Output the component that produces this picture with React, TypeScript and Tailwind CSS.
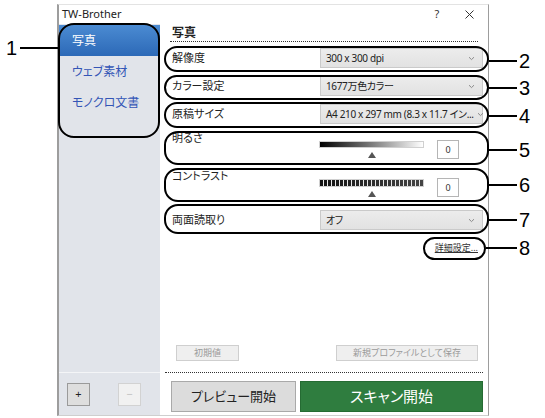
import React from "react";

type Callout = {
  n: string;
  top: number;
  h: number;
  y: number;
};

const callouts: Callout[] = [
  { n: "2", top: 46, h: 26, y: 60 },
  { n: "3", top: 75, h: 25, y: 87 },
  { n: "4", top: 102, h: 26, y: 115 },
  { n: "5", top: 131, h: 34, y: 149 },
  { n: "6", top: 168, h: 34, y: 184 },
  { n: "7", top: 204, h: 30, y: 219 },
];

function Chevron() {
  return (
    <svg width="7" height="5" viewBox="0 0 7 5" className="shrink-0">
      <path d="M1 1.2 L3.5 3.6 L6 1.2" fill="none" stroke="#8a8a8a" strokeWidth="1" />
    </svg>
  );
}

function SelectRow({ label, value }: { label: string; value: string }) {
  return (
    <div className="flex h-[20px] items-center justify-between pl-[12px] pr-[5px]">
      <span className="text-[11px] text-[#222]">{label}</span>
      <div className="flex h-[20px] w-[163px] items-center justify-between gap-[3px] border border-[#cacaca] bg-[linear-gradient(#ececec,#e2e2e2)] pl-[5px] pr-[7px]">
        <span className="whitespace-nowrap text-[10px] tracking-[-0.35px] text-[#222]">{value}</span>
        <Chevron />
      </div>
    </div>
  );
}

function SliderRow({ label, contrast }: { label: string; contrast?: boolean }) {
  return (
    <div className="flex h-[34px] items-start pl-[12px] pr-[5px]">
      <span className="w-[147px] text-[11px] leading-[14px] text-[#222]">{label}</span>
      <div className="mt-[10px] flex w-[105px] flex-col items-center">
        {contrast ? (
          <div className="flex h-[8px] w-full gap-[1px] border border-[#d0d0d0] bg-[#e8e8e8]">
            {Array.from({ length: 26 }).map((_, i) => (
              <span
                key={i}
                className="h-full w-[3px]"
                style={{ backgroundColor: `rgb(${18 + i * 2}, ${18 + i * 2}, ${18 + i * 2})` }}
              />
            ))}
          </div>
        ) : (
          <div className="h-[7px] w-full border border-[#d0d0d0] bg-[linear-gradient(90deg,#000,#6e6e6e_45%,#fff)]" />
        )}
        <div className="mt-[4px] h-0 w-0 border-x-[4px] border-b-[6px] border-x-transparent border-b-[#555]" />
      </div>
      <div className="ml-[13px] mt-[9px] flex h-[19px] w-[22px] items-center justify-center border border-[#b5b5b5] bg-white text-[9px] text-[#333]">
        0
      </div>
    </div>
  );
}

export default function App() {
  return (
    <div className="relative h-[418px] w-[545px] overflow-hidden bg-white [font-family:'Noto_Sans','Noto_Sans_CJK_JP',sans-serif] [font-feature-settings:'palt']">
      <div className="ml-[57px] mt-[4px] flex h-[412px] w-[432px] flex-col border-b border-l-2 border-r border-t border-b-[#cfcfcf] border-l-[#9d9d9d] border-r-[#9d9d9d] border-t-[#e3e3e3]">
        {/* title bar */}
        <div className="flex h-[19px] items-center pl-[3px] pr-[9px]">
          <span className="flex-1 text-[11px] text-[#222]">TW-Brother</span>
          <span className="w-[20px] text-center text-[11px] text-[#333]">?</span>
          <span className="ml-[12px] flex w-[20px] justify-center">
            <svg width="9" height="9" viewBox="0 0 9 9">
              <path d="M0.5 0.5 L8.5 8.5 M8.5 0.5 L0.5 8.5" stroke="#333" strokeWidth="1" />
            </svg>
          </span>
        </div>

        <div className="flex flex-1">
          {/* sidebar */}
          <div className="flex w-[101px] flex-col bg-[#e1e4ea] pt-[1px]">
            <div className="flex h-[31px] items-center bg-[linear-gradient(#4b8bd2,#2c69b7)] pl-[13px] text-[12px] text-white">
              写真
            </div>
            <div className="flex h-[31px] items-center pl-[13px] text-[12px] text-[#3355b6]">ウェブ素材</div>
            <div className="flex h-[31px] items-center pl-[13px] text-[12px] text-[#3355b6]">モノクロ文書</div>
            <div className="mt-auto flex h-[43px] items-start gap-[28px] border-t border-[#f4f5f7] pl-[8px] pt-[10px]">
              <div className="flex h-[23px] w-[23px] items-center justify-center border border-[#9a9a9a] bg-[#dedede] text-[11px] text-[#222]">
                +
              </div>
              <div className="flex h-[23px] w-[23px] items-center justify-center border border-[#d2d2d2] bg-[#f1f1f1] text-[11px] text-[#c0c0c0]">
                −
              </div>
            </div>
          </div>

          {/* main */}
          <div className="flex flex-1 flex-col bg-white pb-[3px] pt-[1px]">
            <div className="mx-[10px] h-[17px] border-b border-dotted border-[#333] pl-[2px] text-[12px] font-bold leading-[16px] text-[#222]">
              写真
            </div>
            <div className="mt-[6px] flex flex-col gap-[8px]">
              <SelectRow label="解像度" value="300 x 300 dpi" />
              <SelectRow label="カラー設定" value="1677万色カラー" />
              <SelectRow label="原稿サイズ" value="A4 210 x 297 mm (8.3 x 11.7 イン..." />
            </div>
            <div className="mt-[7px]">
              <SliderRow label="明るさ" />
            </div>
            <div className="mt-[4px]">
              <SliderRow label="コントラスト" contrast />
            </div>
            <div className="mt-[7px]">
              <SelectRow label="両面読取り" value="オフ" />
            </div>
            <div className="mt-[12px] flex justify-end pr-[10px]">
              <span className="text-[9px] leading-[11px] text-[#333] underline">詳細設定...</span>
            </div>

            <div className="mt-auto flex h-[16px] justify-between pl-[16px] pr-[10px]">
              <div className="flex w-[63px] items-center justify-center border border-[#cfcfcf] bg-[#efefef] text-[9px] text-[#9a9a9a]">
                初期値
              </div>
              <div className="flex w-[142px] items-center justify-center border border-[#cfcfcf] bg-[#efefef] text-[9px] text-[#9a9a9a]">
                新規プロファイルとして保存
              </div>
            </div>
            <div className="ml-[5px] mr-[5px] mt-[11px] border-t border-dotted border-[#333]" />
            <div className="mt-[8px] flex h-[31px] gap-[4px] pl-[11px] pr-[5px]">
              <div className="flex w-[125px] items-center justify-center border border-[#a9a9a9] bg-[#dcdcdc] text-[13px] text-[#222]">
                プレビュー開始
              </div>
              <div className="flex flex-1 items-center justify-center border border-[#256b33] bg-[#2f7d3f] text-[15px] text-white">
                スキャン開始
              </div>
            </div>
          </div>
        </div>
      </div>

      {/* callout 1 */}
      <div className="absolute left-[58px] top-[23px] h-[115px] w-[102px] rounded-[16px] border-2 border-black" />
      <div className="absolute left-[20px] top-[47px] h-[2px] w-[38px] bg-black" />
      <div className="absolute left-[6px] top-[37px] text-[20px] leading-[22px] text-black [font-family:'Liberation_Sans',sans-serif]">
        1
      </div>

      {callouts.map((c) => (
        <React.Fragment key={c.n}>
          <div
            className="absolute left-[164px] w-[325px] rounded-[14px] border-2 border-black"
            style={{ top: c.top, height: c.h }}
          />
          <div className="absolute left-[489px] h-[2px] w-[28px] bg-black" style={{ top: c.y }} />
          <div
            className="absolute left-[519px] text-[20px] leading-[22px] text-black [font-family:'Liberation_Sans',sans-serif]"
            style={{ top: c.y - 10 }}
          >
            {c.n}
          </div>
        </React.Fragment>
      ))}

      {/* callout 8 */}
      <div className="absolute left-[423px] top-[237px] h-[23px] w-[63px] rounded-full border-2 border-black" />
      <div className="absolute left-[486px] top-[247px] h-[2px] w-[31px] bg-black" />
      <div className="absolute left-[519px] top-[237px] text-[20px] leading-[22px] text-black [font-family:'Liberation_Sans',sans-serif]">
        8
      </div>
    </div>
  );
}
